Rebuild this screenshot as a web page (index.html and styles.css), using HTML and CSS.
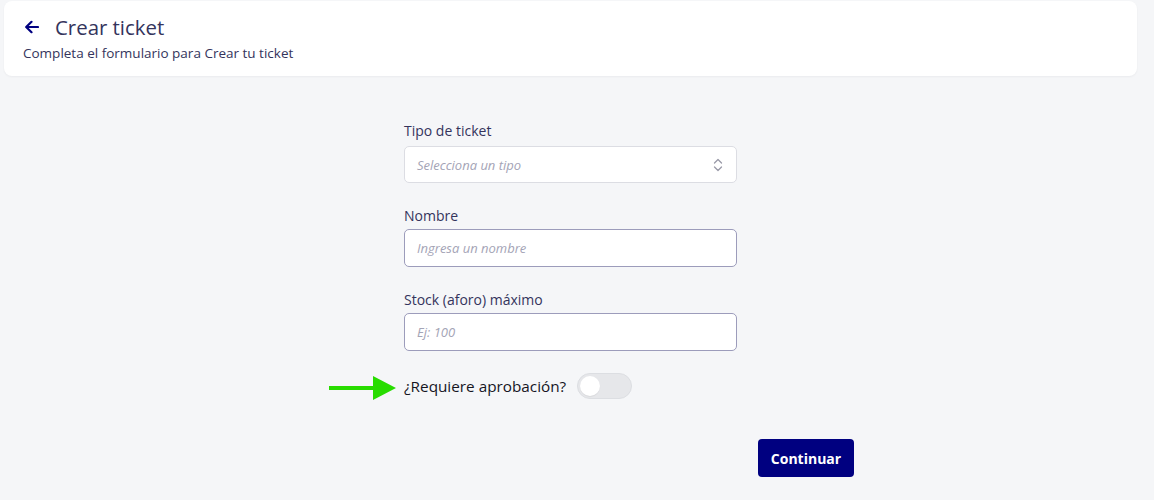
FILE: index.html
```html
<!DOCTYPE html>
<html lang="es">
<head>
<meta charset="utf-8">
<title>Crear ticket</title>
<link rel="stylesheet" href="styles.css">
</head>
<body>
<header class="page-header">
  <div class="title-row">
    <svg class="back-icon" width="15" height="14" viewBox="0 0 15 14" aria-hidden="true">
      <path d="M14 7H2.5M7.5 1.8L2.2 7l5.3 5.2" fill="none" stroke="#000080" stroke-width="2.2" stroke-linecap="round" stroke-linejoin="round"/>
    </svg>
    <h1 class="title">Crear ticket</h1>
  </div>
  <p class="subtitle">Completa el formulario para Crear tu ticket</p>
</header>

<main class="main">
  <form class="form">
    <div class="field field-select">
      <label class="label">Tipo de ticket</label>
      <div class="select">
        <span class="placeholder">Selecciona un tipo</span>
        <svg class="chevrons" width="10" height="14" viewBox="0 0 10 14" aria-hidden="true">
          <path d="M1.5 5L5 1.5 8.5 5M1.5 9L5 12.5 8.5 9" fill="none" stroke="#9a9aa8" stroke-width="1.3" stroke-linecap="round" stroke-linejoin="round"/>
        </svg>
      </div>
    </div>
    <div class="field">
      <label class="label">Nombre</label>
      <div class="input"><span class="placeholder">Ingresa un nombre</span></div>
    </div>
    <div class="field">
      <label class="label">Stock (aforo) máximo</label>
      <div class="input"><span class="placeholder">Ej: 100</span></div>
    </div>
    <div class="toggle-row">
      <svg class="pointer-arrow" width="67" height="26" viewBox="0 0 67 26" aria-hidden="true">
        <path d="M0 11h44V1l23 12-23 12V15H0z" fill="#28dc00"/>
      </svg>
      <span class="toggle-label">¿Requiere aprobación?</span>
      <span class="toggle"><span class="knob"></span></span>
    </div>
    <div class="actions">
      <button type="button" class="btn">Continuar</button>
    </div>
  </form>
</main>
</body>
</html>
```

FILE: styles.css
```css
* { box-sizing: border-box; }

body {
  margin: 0;
  background: #f5f6f8;
  font-family: "Open Sans", "Noto Sans", sans-serif;
  color: #34345c;
  height: 500px;
  overflow: hidden;
}

.page-header {
  margin: 1px 17px 0 4px;
  height: 75px;
  background: #fff;
  border-radius: 8px;
  box-shadow: 0 1px 2px rgba(30, 30, 60, 0.05);
  padding: 13px 20px 0 19px;
}

.title-row {
  display: flex;
  align-items: center;
  gap: 16px;
  height: 26px;
}

.back-icon { margin-left: 1px; display: block; }

.title {
  margin: 0;
  font-size: 20.4px;
  font-weight: 400;
  line-height: 26px;
  color: #34345c;
}

.subtitle {
  margin: 4px 0 0;
  font-size: 13.5px;
  line-height: 18px;
  color: #34345c;
}

.main {
  margin: 0 17px 0 4px;
  padding-top: 45px;
}

.form {
  width: 333px;
  margin: 0 auto;
}

.field { margin-bottom: 23px; }

.label {
  display: block;
  font-size: 14px;
  line-height: 20px;
  margin-bottom: 3px;
  color: #34345c;
}

.field-select .label { margin-bottom: 5px; }

.select, .input {
  display: flex;
  align-items: center;
  justify-content: space-between;
  background: #fff;
  border-radius: 5px;
  padding: 0 13px 0 12px;
}

.select {
  height: 37px;
  border: 1px solid #dcdde3;
}

.input {
  height: 38px;
  border: 1px solid #9c9cbb;
}

.placeholder {
  font-size: 13px;
  font-style: italic;
  color: #a4a4b6;
}

.chevrons { display: block; }

.toggle-row {
  position: relative;
  display: flex;
  align-items: center;
  gap: 11px;
  height: 26px;
  margin-top: -1px;
}

.pointer-arrow {
  position: absolute;
  left: -75px;
  top: 2px;
}

.toggle-label {
  font-size: 15.3px;
  color: #15151f;
}

.toggle {
  display: inline-flex;
  align-items: center;
  width: 55px;
  height: 26px;
  border-radius: 13px;
  background: #e6e7ea;
  border: 1px solid #dcdee2;
  padding-left: 2px;
}

.knob {
  width: 20px;
  height: 20px;
  border-radius: 50%;
  background: #fff;
  box-shadow: 0 1px 1px rgba(0, 0, 0, 0.06);
}

.actions {
  display: flex;
  justify-content: flex-end;
  margin-right: -117px;
  margin-top: 40px;
}

.btn {
  width: 96px;
  height: 38px;
  border: 0;
  border-radius: 4px;
  background: #000080;
  color: #fff;
  font-family: "Open Sans", "Noto Sans", sans-serif;
  font-weight: 700;
  font-size: 14px;
}
```
